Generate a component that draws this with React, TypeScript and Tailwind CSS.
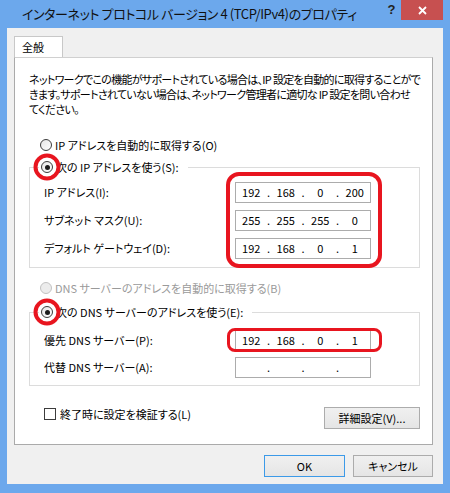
import React, { Fragment } from 'react';

const FONT = "font-['Noto_Sans_CJK_JP','Noto_Sans',sans-serif] [font-feature-settings:'palt']";

const Radio: React.FC<{ checked?: boolean; disabled?: boolean; ring?: boolean }> = ({
  checked,
  disabled,
  ring,
}) => (
  <span className="relative flex w-[12px] h-[12px] shrink-0">
    <span
      className={`flex w-[12px] h-[12px] items-center justify-center rounded-full border ${
        disabled
          ? 'border-[#c2c2c2] bg-[#ececec]'
          : 'border-[#3c3c3c] bg-gradient-to-br from-[#e6e6e6] to-white'
      }`}
    >
      {checked && <span className="w-[5px] h-[5px] rounded-full bg-[#1b1b1b]" />}
    </span>
    {ring && (
      <span className="absolute left-1/2 top-1/2 -translate-x-1/2 -translate-y-1/2 w-[27px] h-[27px] rounded-full border-[4px] border-[#e8151f]" />
    )}
  </span>
);

const IpBox: React.FC<{ parts: string[] }> = ({ parts }) => (
  <div className="flex w-[136px] h-[21px] items-center border border-[#acacac] bg-white text-[11px] text-black">
    {parts.map((p, i) => (
      <Fragment key={i}>
        {i > 0 && <span className="w-[4px] text-center">.</span>}
        <span className="flex-1 text-center">{p}</span>
      </Fragment>
    ))}
  </div>
);

const Label: React.FC<{ children: React.ReactNode }> = ({ children }) => (
  <div className="flex h-[21px] items-center whitespace-nowrap">{children}</div>
);

export default function App() {
  return (
    <div className={`flex w-[450px] h-[493px] flex-col bg-[#6ca8ec] ${FONT}`}>
      {/* title bar */}
      <div className="flex h-[28px] items-start">
        <div className="flex h-[28px] flex-1 items-center pl-[22px] text-[13px] tracking-[-0.4px] text-[#111] whitespace-nowrap">
          インターネット プロトコル バージョン 4 (TCP/IPv4)のプロパティ
        </div>
        <div className="flex h-[20px] w-[13px] items-center justify-center text-[13px] font-bold text-[#222] font-['Liberation_Sans',sans-serif]">
          ?
        </div>
        <div className="ml-[3px] mr-[7px] flex h-[20px] w-[42px] items-center justify-center bg-[#c75050] text-white">
          <svg width="9" height="9" viewBox="0 0 9 9">
            <path d="M1 1 L8 8 M8 1 L1 8" stroke="white" strokeWidth="1.8" />
          </svg>
        </div>
      </div>

      {/* client */}
      <div className="mx-[7px] flex h-[456px] flex-col bg-[#f0f0f0] pl-[7px] pr-[10px] pt-[8px]">
        <div className="flex">
          <div className="flex h-[21px] w-[49px] items-center border border-b-0 border-[#c8c8c8] bg-white pl-[7px] text-[11px] text-black">
            全般
          </div>
        </div>
        <div className="flex h-[388px] flex-col border border-[#aaaaaa] border-t-[#d0d0d0] bg-white pl-[14px] pr-[12px] pt-[14px] text-[11px] text-black">
          <p className="leading-[15px] tracking-[-0.7px] whitespace-nowrap">
            ネットワークでこの機能がサポートされている場合は、IP 設定を自動的に取得することがで
            <br />
            きます。サポートされていない場合は、ネットワーク管理者に適切な IP 設定を問い合わせ
            <br />
            てください。
          </p>

          <div className="mt-[18px] flex h-[20px] items-center gap-[3px] pl-[11px]">
            <Radio />
            <span>IP アドレスを自動的に取得する(O)</span>
          </div>

          <fieldset className="mt-[2px] border border-[#dcdcdc] pb-[8px] pl-[14px] pr-[48px]">
            <legend className="ml-[-5px] flex h-[20px] items-center gap-[3px] pl-[2px] pr-[9px]">
              <Radio checked ring />
              <span>次の IP アドレスを使う(S):</span>
            </legend>
            <div className="flex justify-between pt-[5px]">
              <div className="flex flex-col gap-[7px]">
                <Label>IP アドレス(I):</Label>
                <Label>サブネット マスク(U):</Label>
                <Label>デフォルト ゲートウェイ(D):</Label>
              </div>
              <div className="relative flex flex-col gap-[7px]">
                <IpBox parts={['192', '168', '0', '200']} />
                <IpBox parts={['255', '255', '255', '0']} />
                <IpBox parts={['192', '168', '0', '1']} />
                <span className="absolute -left-[9px] -right-[11px] -top-[10px] -bottom-[9px] rounded-[13px] border-[4px] border-[#e8151f]" />
              </div>
            </div>
          </fieldset>

          <div className="mt-[10px] flex h-[20px] items-center gap-[3px] pl-[11px] text-[#9a9a9a]">
            <Radio disabled />
            <span>DNS サーバーのアドレスを自動的に取得する(B)</span>
          </div>

          <fieldset className="mt-[4px] border border-[#dcdcdc] pb-[7px] pl-[14px] pr-[48px]">
            <legend className="ml-[-5px] flex h-[20px] items-center gap-[3px] pl-[2px] pr-[9px]">
              <Radio checked ring />
              <span>次の DNS サーバーのアドレスを使う(E):</span>
            </legend>
            <div className="flex justify-between pt-[8px]">
              <div className="flex flex-col gap-[6px]">
                <Label>優先 DNS サーバー(P):</Label>
                <Label>代替 DNS サーバー(A):</Label>
              </div>
              <div className="flex flex-col gap-[6px]">
                <div className="relative">
                  <IpBox parts={['192', '168', '0', '1']} />
                  <span className="absolute -left-[8px] -right-[11px] -top-[2px] -bottom-[1px] rounded-[8px] border-[3px] border-[#e8151f]" />
                </div>
                <IpBox parts={['', '', '', '']} />
              </div>
            </div>
          </fieldset>

          <div className="mt-[21px] flex items-start justify-between">
            <div className="mt-[1px] flex items-center gap-[4px] pl-[15px]">
              <span className="h-[12px] w-[12px] border border-[#3c3c3c] bg-white" />
              <span className="leading-[12px]">終了時に設定を検証する(L)</span>
            </div>
            <button className="flex h-[22px] w-[96px] items-center justify-center border border-[#acacac] bg-gradient-to-b from-[#f0f0f0] to-[#e5e5e5] text-[11px] text-black">
              詳細設定(V)...
            </button>
          </div>
        </div>

        <div className="mt-[10px] flex justify-end gap-[8px]">
          <button className="flex h-[22px] w-[81px] items-center justify-center border border-[#3c9ae8] bg-gradient-to-b from-[#f0f0f0] to-[#e5e5e5] text-[11px] text-black">
            OK
          </button>
          <button className="flex h-[22px] w-[80px] items-center justify-center border border-[#acacac] bg-gradient-to-b from-[#f0f0f0] to-[#e5e5e5] text-[11px] text-black">
            キャンセル
          </button>
        </div>
      </div>
    </div>
  );
}
